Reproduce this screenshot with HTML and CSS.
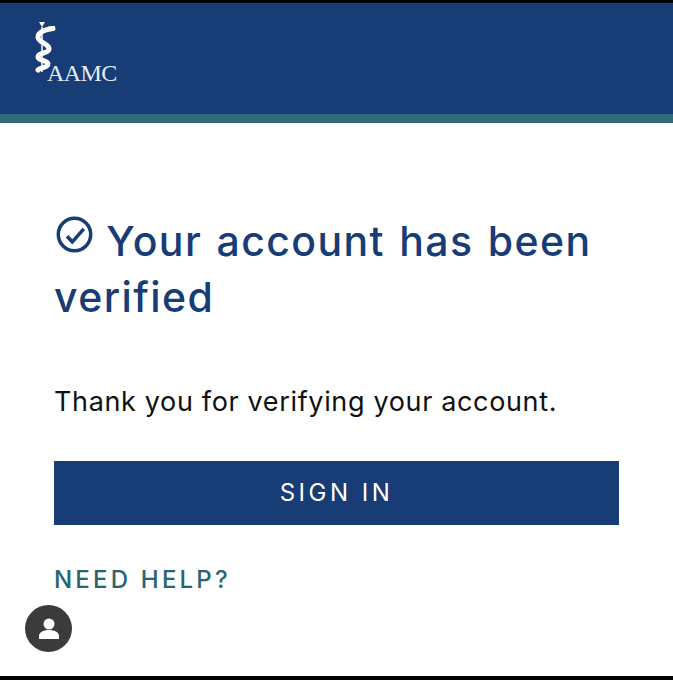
FILE: index.html
```html
<!DOCTYPE html>
<html lang="en">
<head>
<meta charset="utf-8">
<title>AAMC - Account verified</title>
<link rel="stylesheet" href="styles.css">
</head>
<body>
<div class="page">
  <header class="header">
    <div class="logo">
      <svg class="logo-mark" width="22" height="52" viewBox="0 0 22 52" aria-hidden="true">
        <path class="staff" d="M5 0h6l-3 5z"/>
        <path class="staff-line" d="M8 5 V50"/>
        <path class="snake" d="M19 6.500 C12 7.500 4 10 4 15 C4 21 15 21 15 27 C15 32 4 30 4 35 C4 39 14 38 14 42 C14 46 6 45 4 48"/>
        <path class="head" d="M14 4.500 L21 4 L20.500 8 L15 9z"/>
      </svg>
      <span class="logo-text">AAMC</span>
    </div>
  </header>
  <div class="stripe"></div>
  <main class="content">
    <h1 class="title">
      <svg class="check" width="37" height="37" viewBox="0 0 37 37" aria-hidden="true">
        <circle cx="18.5" cy="18.5" r="16.2"/>
        <path d="M11 20.200l5.300 5.600L27.800 12.800"/>
      </svg>
      Your account has been verified
    </h1>
    <p class="message">Thank you for verifying your account.</p>
    <a class="button" href="#">SIGN IN</a>
    <a class="help" href="#">NEED HELP?</a>
  </main>
  <div class="avatar">
    <svg width="26" height="26" viewBox="0 0 26 26" aria-hidden="true">
      <circle cx="13" cy="8" r="5.5"/>
      <path d="M3 23v-3c0-4 5-6 10-6s10 2 10 6v3z"/>
    </svg>
  </div>
</div>
</body>
</html>
```
FILE: styles.css
```css
html, body {
  margin: 0;
  padding: 0;
  background: #000;
}
.page {
  position: relative;
  box-sizing: border-box;
  width: 673px;
  height: 680px;
  overflow: hidden;
  display: flex;
  flex-direction: column;
  background: #fff;
  border-top: 3px solid #000;
  border-bottom: 4px solid #000;
  font-family: "Inter", "Liberation Sans", sans-serif;
}
.header {
  height: 111px;
  flex: none;
  background: #173c76;
  padding: 19px 0 0 34px;
  box-sizing: border-box;
}
.logo {
  display: flex;
  align-items: flex-start;
}
.logo-mark {
  display: block;
  flex: none;
}
.staff, .head { fill: #fff; }
.snake {
  fill: none;
  stroke: #fff;
  stroke-width: 5;
  stroke-linecap: round;
}
.staff-line {
  fill: none;
  stroke: #fff;
  stroke-width: 1.5;
}
.logo-text {
  font-family: "Liberation Serif", serif;
  font-size: 24px;
  line-height: 28px;
  color: #e6ebf3;
  margin: 37px 0 0 -9px;
  letter-spacing: -0.6px;
}
.stripe {
  height: 9px;
  flex: none;
  background: #2f6b78;
}
.content {
  flex: 1;
  padding: 90px 54px 0;
}
.title {
  margin: 0;
  font-size: 41px;
  line-height: 56px;
  font-weight: 500;
  letter-spacing: 1.4px;
  word-spacing: 2px;
  color: #173c76;
}
.check {
  vertical-align: 3px;
  margin: 0 -1px 0 2px;
}
.check circle, .check path {
  fill: none;
  stroke: #173c76;
  stroke-width: 3.5;
}
.message {
  margin: 59px 0 0;
  font-size: 27px;
  line-height: 36px;
  letter-spacing: 0.65px;
  color: #111;
}
.button {
  display: block;
  margin-top: 41px;
  height: 64px;
  line-height: 64px;
  text-align: center;
  background: #173c76;
  color: #fff;
  font-size: 24px;
  letter-spacing: 3.5px;
  text-decoration: none;
}
.help {
  display: block;
  margin-top: 40px;
  font-size: 24px;
  line-height: 30px;
  font-weight: 500;
  letter-spacing: 3.2px;
  color: #29646f;
  text-decoration: none;
}
.avatar {
  position: absolute;
  left: 25px;
  top: 602px;
  width: 47px;
  height: 47px;
  border-radius: 50%;
  background: #3b3b3b;
  display: flex;
  align-items: center;
  justify-content: center;
}
.avatar svg { fill: #fff; }
```
